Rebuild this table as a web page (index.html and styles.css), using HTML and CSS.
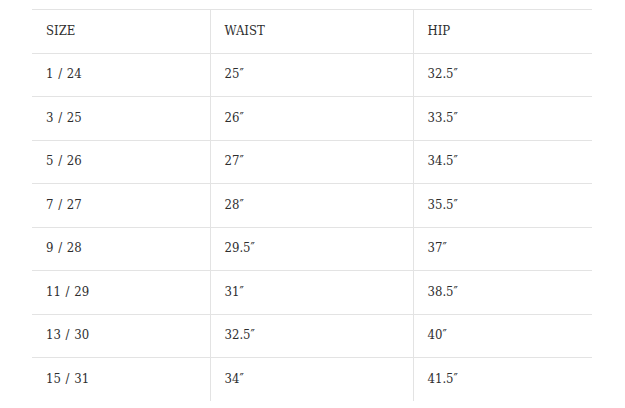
FILE: index.html
```html
<!DOCTYPE html>
<html>
<head>
<meta charset="utf-8">
<link rel="stylesheet" href="styles.css">
</head>
<body>
<div class="wrap">
<table class="size-table">
  <colgroup><col class="c1"><col class="c2"><col class="c3"></colgroup>
  <tr><td>SIZE</td><td>WAIST</td><td>HIP</td></tr>
  <tr><td>1 / 24</td><td>25″</td><td>32.5″</td></tr>
  <tr><td>3 / 25</td><td>26″</td><td>33.5″</td></tr>
  <tr><td>5 / 26</td><td>27″</td><td>34.5″</td></tr>
  <tr><td>7 / 27</td><td>28″</td><td>35.5″</td></tr>
  <tr><td>9 / 28</td><td>29.5″</td><td>37″</td></tr>
  <tr><td>11 / 29</td><td>31″</td><td>38.5″</td></tr>
  <tr><td>13 / 30</td><td>32.5″</td><td>40″</td></tr>
  <tr><td>15 / 31</td><td>34″</td><td>41.5″</td></tr>
</table>
</div>
</body>
</html>
```
FILE: styles.css
```css
html, body { margin: 0; padding: 0; background: #fff; }
.wrap { padding: 9px 33px 0 32px; }
.size-table {
  width: 560px;
  border-collapse: collapse;
  table-layout: fixed;
  font-family: "DejaVu Serif", serif;
  font-stretch: condensed;
  font-size: 13px;
  color: #2e2e2e;
}
.c1 { width: 178px; }
.c2 { width: 203px; }
.c3 { width: 179px; }
.size-table tr { height: 43.5px; }
.size-table td {
  border-top: 1px solid #e3e3e3;
  border-left: 1px solid #e3e3e3;
  padding: 0 14px 2px;
  vertical-align: middle;
  word-spacing: 1px;
}
.size-table td:first-child { border-left: none; }
```
